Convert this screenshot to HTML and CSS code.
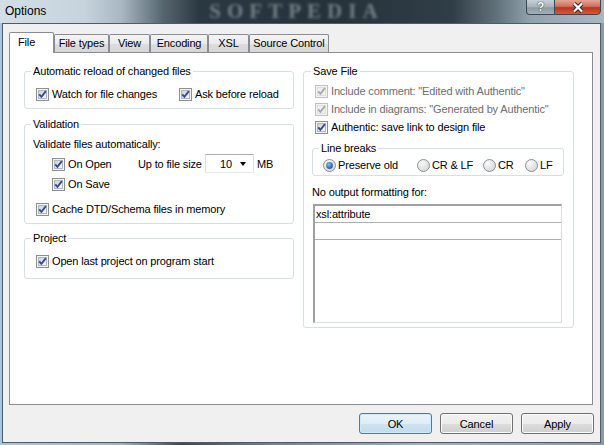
FILE: index.html
```html
<!DOCTYPE html>
<html lang="en">
<head>
  <meta charset="UTF-8">
  <title>Options</title>
  <link rel="stylesheet" href="styles.css">
</head>
<body>
<svg class="defs" width="0" height="0">
  <defs>
    <linearGradient id="cb-fill" x1="0" y1="0" x2="1" y2="1">
      <stop offset="0" stop-color="#cdd1d7"/>
      <stop offset="1" stop-color="#f8f8f8"/>
    </linearGradient>
    <radialGradient id="rb-fill" cx=".35" cy=".3" r=".8">
      <stop offset="0" stop-color="#fbfbfb"/>
      <stop offset="1" stop-color="#d2d4d6"/>
    </radialGradient>
    <radialGradient id="rb-dot" cx=".4" cy=".35" r=".7">
      <stop offset="0" stop-color="#7fc3f2"/>
      <stop offset="1" stop-color="#1a4d92"/>
    </radialGradient>
    <symbol id="cb-on" viewBox="0 0 13 13">
      <rect x=".5" y=".5" width="12" height="12" fill="#f4f4f4" stroke="#8e8f8f"/>
      <rect x="2.5" y="2.5" width="8" height="8" fill="url(#cb-fill)" stroke="#b3b7bd"/>
      <path d="M3.2 6.3l2.2 2.5 4.5-5.7" fill="none" stroke="#2f4f93" stroke-width="1.9"/>
    </symbol>
    <symbol id="cb-dis" viewBox="0 0 13 13">
      <rect x=".5" y=".5" width="12" height="12" fill="#f4f4f4" stroke="#c2c2c2"/>
      <rect x="2.5" y="2.5" width="8" height="8" fill="#f0f0f0" stroke="#dedede"/>
      <path d="M3.2 6.3l2.2 2.5 4.5-5.7" fill="none" stroke="#a9a9a9" stroke-width="1.9"/>
    </symbol>
    <symbol id="rb-on" viewBox="0 0 13 13">
      <circle cx="6.5" cy="6.5" r="6" fill="url(#rb-fill)" stroke="#8e8f8f"/>
      <circle cx="6.5" cy="6.5" r="3.4" fill="url(#rb-dot)"/>
    </symbol>
    <symbol id="rb-off" viewBox="0 0 13 13">
      <circle cx="6.5" cy="6.5" r="6" fill="url(#rb-fill)" stroke="#8e8f8f"/>
    </symbol>
  </defs>
</svg>

<div class="window">
  <div class="titlebar">
    <span class="title">Options</span>
    <span class="watermark">SOFTPEDIA</span>
    <div class="caption">
      <span class="cbtn help">?</span>
      <span class="cbtn close">
        <svg width="14" height="11" viewBox="0 0 14 11">
          <path d="M3 1.5l8 8M11 1.5l-8 8" stroke="#3a2320" stroke-width="4"/>
          <path d="M3 1.5l8 8M11 1.5l-8 8" stroke="#fff" stroke-width="2.3"/>
        </svg>
      </span>
    </div>
  </div>

  <div class="client">
    <div class="tabs">
      <span class="tab active tab-file">File</span>
      <span class="tab tab-types">File types</span>
      <span class="tab tab-view">View</span>
      <span class="tab tab-enc">Encoding</span>
      <span class="tab tab-xsl">XSL</span>
      <span class="tab tab-src">Source Control</span>
    </div>

    <div class="panel">
      <div class="col col-left">
        <fieldset class="fs-reload">
          <legend>Automatic reload of changed files</legend>
          <div class="row pad5">
            <label class="check w143"><svg class="box"><use href="#cb-on"/></svg>Watch for file changes</label>
            <label class="check"><svg class="box"><use href="#cb-on"/></svg>Ask before reload</label>
          </div>
        </fieldset>

        <fieldset class="fs-valid">
          <legend>Validation</legend>
          <div class="row tall pad2">Validate files automatically:</div>
          <div class="row tall pad21">
            <label class="check w86"><svg class="box"><use href="#cb-on"/></svg>On Open</label>
            <span class="w67">Up to file size</span>
            <span class="combo"><span>10</span><span class="arrow"></span></span>
            <span class="unit">MB</span>
          </div>
          <div class="row tall pad21">
            <label class="check"><svg class="box"><use href="#cb-on"/></svg>On Save</label>
          </div>
          <div class="row tall pad5 gap-top">
            <label class="check"><svg class="box"><use href="#cb-on"/></svg>Cache DTD/Schema files in memory</label>
          </div>
        </fieldset>

        <fieldset class="fs-project">
          <legend>Project</legend>
          <div class="row pad5">
            <label class="check"><svg class="box"><use href="#cb-on"/></svg>Open last project on program start</label>
          </div>
        </fieldset>
      </div>

      <div class="col col-right">
        <fieldset class="fs-save">
          <legend>Save File</legend>
          <div class="row pad4">
            <label class="check disabled"><svg class="box"><use href="#cb-dis"/></svg>Include comment: "Edited with Authentic"</label>
          </div>
          <div class="row pad4">
            <label class="check disabled"><svg class="box"><use href="#cb-dis"/></svg>Include in diagrams: "Generated by Authentic"</label>
          </div>
          <div class="row pad4">
            <label class="check"><svg class="box"><use href="#cb-on"/></svg>Authentic: save link to design file</label>
          </div>

          <fieldset class="fs-breaks">
            <legend>Line breaks</legend>
            <div class="row pad4">
              <label class="radio w94"><svg class="box"><use href="#rb-on"/></svg>Preserve old</label>
              <label class="radio w66"><svg class="box"><use href="#rb-off"/></svg>CR &amp; LF</label>
              <label class="radio w42"><svg class="box"><use href="#rb-off"/></svg>CR</label>
              <label class="radio"><svg class="box"><use href="#rb-off"/></svg>LF</label>
            </div>
          </fieldset>

          <div class="row pad1 label-top">No output formatting for:</div>
          <div class="list">
            <div class="list-row">xsl:attribute</div>
            <div class="list-row"></div>
          </div>
        </fieldset>
      </div>
    </div>

    <div class="actions">
      <button class="btn default">OK</button>
      <button class="btn">Cancel</button>
      <button class="btn">Apply</button>
    </div>
  </div>
</div>
</body>
</html>
```

FILE: styles.css
```css
body {
  margin: 0;
  font-family: "Liberation Sans", Arial, sans-serif;
  font-size: 11px;
  letter-spacing: -0.15px;
  color: #000;
}
.defs {
  display: block;
  width: 0;
  height: 0;
}
.window {
  width: 604px;
  height: 445px;
  overflow: hidden;
  background: linear-gradient(90deg, #a9c6e0 0%, #9bb4c8 20%, #3b4a54 30%, #6f8594 45%, #9fb3c2 70%, #8a9ba7 100%);
}

/* title bar */
.titlebar {
  height: 23px;
  display: flex;
  align-items: flex-start;
  background: linear-gradient(90deg, #d3dee7 0%, #c6d3dd 14%, #a9b8c3 20%, #56666f 27%, #2a3841 33%, #25323a 55%, #303e47 75%, #607079 82%, #93a3ae 88%, #a9b7c1 100%);
}
.title {
  padding: 4px 0 0 5px;
  font-size: 12px;
  line-height: 14px;
  letter-spacing: 0;
}
.watermark {
  margin: 0 0 0 163px;
  font: bold 21px "Liberation Serif", serif;
  letter-spacing: 6px;
  line-height: 23px;
  color: rgba(140, 153, 160, 0.75);
  filter: blur(1.4px);
}
.caption {
  display: flex;
  margin-left: auto;
  margin-right: 3px;
}
.cbtn {
  height: 16px;
  margin-top: -1px;
  box-sizing: border-box;
  border: 1px solid #3b4852;
  display: flex;
  align-items: center;
  justify-content: center;
}
.help {
  width: 28px;
  border-right: none;
  border-radius: 0 0 0 4px;
  background: linear-gradient(#c7d0d6, #a6b1b8 50%, #8e9aa2 55%, #a4b0b8);
  color: #fff;
  font: bold 12px "Liberation Sans", sans-serif;
  text-shadow: 0 0 1px #1e2a33, 0 0 1px #1e2a33;
}
.close {
  width: 47px;
  border-radius: 0 0 4px 0;
  background: linear-gradient(#e4a596, #d0705e 45%, #b8361f 55%, #cf5b3c);
}

/* client area */
.client {
  margin-left: 2px;
  width: 599px;
  height: 420px;
  box-sizing: border-box;
  border: 1px solid #4e5c66;
  background: #f0f0f0;
  padding: 8px 6px 0 6px;
}
.tabs {
  display: flex;
  align-items: flex-end;
  height: 20px;
}
.tab {
  height: 18px;
  box-sizing: border-box;
  border: 1px solid #898c95;
  border-bottom: none;
  border-radius: 2px 2px 0 0;
  background: linear-gradient(#f4f4f4, #ebebeb 50%, #dddddd 50%, #d6d6d6);
  text-align: center;
  line-height: 16px;
}
.tab.active {
  height: 21px;
  margin-bottom: -1px;
  background: #fff;
  position: relative;
  z-index: 1;
  line-height: 18px;
  text-align: left;
  padding-left: 8px;
}
.tab-file { width: 45px; }
.tab-types { width: 55px; }
.tab-view { width: 41px; }
.tab-enc { width: 58px; }
.tab-xsl { width: 41px; }
.tab-src { width: 80px; }

.panel {
  width: 584px;
  height: 353px;
  box-sizing: border-box;
  border: 1px solid #898c95;
  background: #fff;
  display: flex;
  align-items: flex-start;
  gap: 9px;
  padding: 11px 0 0 14px;
}
.col-left { width: 270px; }
.col-right { width: 271px; }

fieldset {
  margin: 0;
  min-width: 0;
  border: 1px solid #d5dfe5;
  border-radius: 3px;
}
legend {
  padding: 0 2px;
  line-height: 14px;
}
.fs-reload { padding: 7px 0 5px 6px; }
.fs-valid { padding: 3px 0 4px 6px; margin-top: 8px; }
.fs-project { padding: 7px 0 8px 6px; margin-top: 7px; }
.fs-save { padding: 4px 9px 4px 7px; }
.fs-breaks { padding: 1px 0 1px 6px; margin: 5px 0 0 1px; }

.row {
  display: flex;
  align-items: center;
  height: 18px;
}
.row.tall { height: 20px; }
.gap-top { margin-top: 5px; }
.label-top { margin-top: 7px; }
.pad1 { padding-left: 1px; }
.pad2 { padding-left: 2px; }
.pad4 { padding-left: 4px; }
.pad5 { padding-left: 5px; }
.pad21 { padding-left: 21px; }

.check, .radio {
  display: flex;
  align-items: center;
  gap: 3px;
  white-space: nowrap;
}
.radio { gap: 2px; }
.box {
  width: 13px;
  height: 13px;
  flex: none;
}
.disabled { color: #6d6d6d; }
.w143 { width: 143px; }
.w86 { width: 86px; }
.w67 { width: 67px; }
.w94 { width: 94px; }
.w66 { width: 66px; }
.w42 { width: 42px; }

.combo {
  width: 49px;
  height: 19px;
  box-sizing: border-box;
  border: 1px solid;
  border-color: #abadb3 #e2e3ea #e3e9ef #dbdfe6;
  background: #fff;
  display: flex;
  align-items: center;
  justify-content: flex-end;
  gap: 8px;
  padding-right: 7px;
  margin-top: -1px;
}
.arrow {
  width: 0;
  height: 0;
  border-left: 3.5px solid transparent;
  border-right: 3.5px solid transparent;
  border-top: 4px solid #000;
}
.unit { margin-left: 3px; }

.list {
  margin: 3px 0 0 2px;
  width: 249px;
  height: 119px;
  box-sizing: border-box;
  border-style: solid;
  border-width: 2px 1px 1px 2px;
  border-color: #a0a0a0 #dcdcdc #dcdcdc #a0a0a0;
  background: #fff;
}
.list-row {
  height: 17px;
  box-sizing: border-box;
  border-bottom: 1px solid #b0b0b0;
  padding-left: 1px;
  line-height: 16px;
}

/* dialog buttons */
.actions {
  display: flex;
  justify-content: flex-end;
  gap: 8px;
  margin-top: 8px;
}
.btn {
  width: 73px;
  height: 21px;
  padding: 0;
  font: 11px "Liberation Sans", Arial, sans-serif;
  letter-spacing: -0.15px;
  color: #000;
  border: 1px solid #707070;
  border-radius: 3px;
  background: linear-gradient(#f2f2f2, #ebebeb 50%, #dddddd 50%, #cfcfcf);
  box-shadow: inset 0 0 0 1px #fcfcfc;
}
.btn.default {
  border-color: #3c7fb1;
  background: linear-gradient(#eaf4fa, #dfedf7 50%, #cfe3f1 50%, #c3dbee);
  box-shadow: inset 0 0 0 1px #c9ebfb;
}
```
